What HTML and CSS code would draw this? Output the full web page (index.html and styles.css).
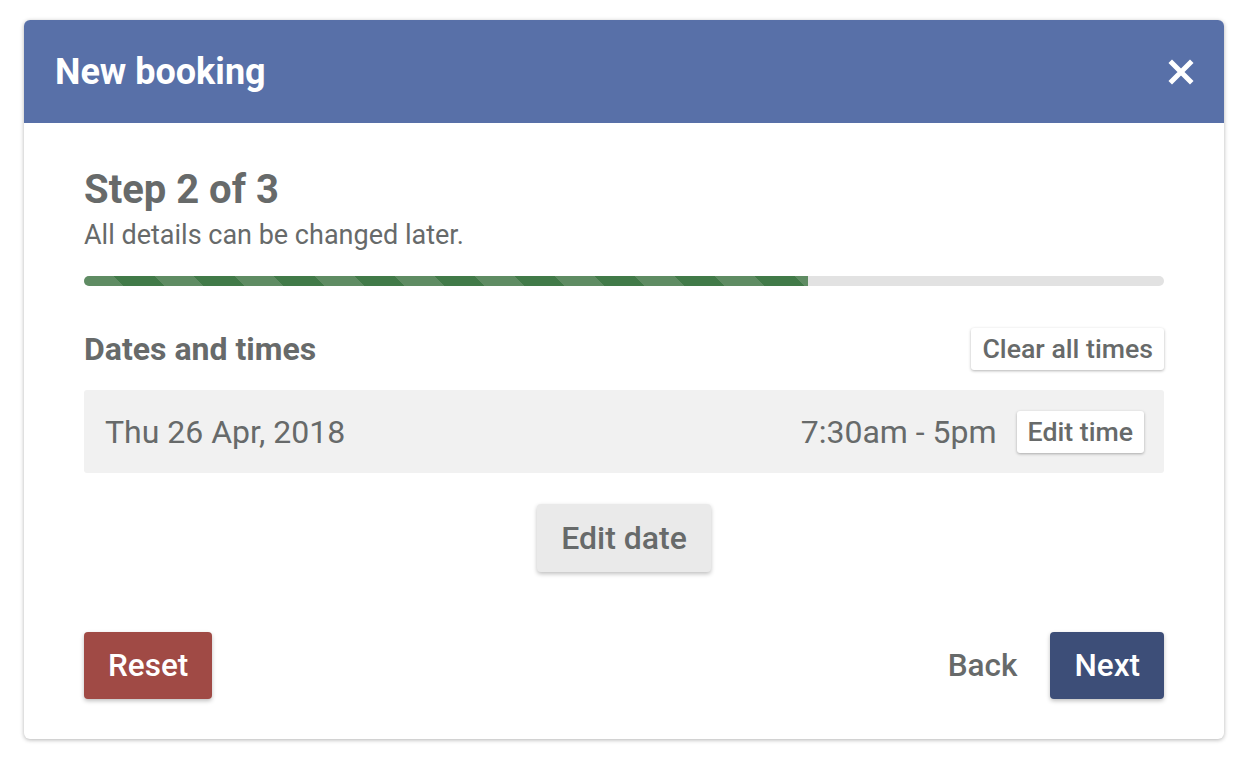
FILE: index.html
```html
<!DOCTYPE html>
<html lang="en">
<head>
<meta charset="utf-8">
<title>New booking</title>
<link rel="stylesheet" href="styles.css">
</head>
<body>
<div class="modal">
  <div class="modal-header">
    <h1 class="modal-title">New booking</h1>
    <button class="close" aria-label="Close">
      <svg width="26" height="26" viewBox="0 0 26 26"><path d="M4 4 L22 22 M22 4 L4 22" stroke="#fff" stroke-width="5" stroke-linecap="square"/></svg>
    </button>
  </div>
  <div class="modal-body">
    <h2 class="step">Step 2 of 3</h2>
    <p class="hint">All details can be changed later.</p>
    <div class="progress"><div class="progress-fill" style="width:67%"></div></div>
    <div class="section-head">
      <h3 class="section-title">Dates and times</h3>
      <button class="btn-small">Clear all times</button>
    </div>
    <div class="date-row">
      <span class="date">Thu 26 Apr, 2018</span>
      <div class="time-wrap">
        <span class="time">7:30am - 5pm</span>
        <button class="btn-small">Edit time</button>
      </div>
    </div>
    <div class="center">
      <button class="btn-gray">Edit date</button>
    </div>
    <div class="footer">
      <button class="btn btn-reset">Reset</button>
      <div class="footer-right">
        <button class="btn btn-link">Back</button>
        <button class="btn btn-next">Next</button>
      </div>
    </div>
  </div>
</div>
</body>
</html>
```

FILE: styles.css
```css
* { box-sizing: border-box; }
html, body { margin: 0; background: #fff; }
body {
  font-family: Roboto, "Liberation Sans", Arial, sans-serif;
  padding: 20px 24px;
  color: #676a6a;
}
button { font-family: inherit; cursor: pointer; }
.modal {
  width: 1200px;
  border-radius: 6px;
  box-shadow: 0 1px 4px rgba(0,0,0,0.3);
  overflow: hidden;
  background: #fff;
}
.modal-header {
  background: #5870a8;
  height: 103px;
  display: flex;
  align-items: center;
  justify-content: space-between;
  padding: 0 30px 0 31px;
}
.modal-title {
  margin: 0;
  color: #fff;
  font-size: 36px;
  line-height: 44px;
  font-weight: 700;
}
.close {
  background: none;
  border: 0;
  padding: 0;
  display: flex;
}
.modal-body {
  padding: 43px 60px 40px;
}
.step {
  margin: 0;
  font-size: 40px;
  font-weight: 700;
  line-height: 48px;
}
.hint {
  margin: 5px 0 0;
  font-size: 27px;
  line-height: 32px;
}
.progress {
  margin-top: 25px;
  height: 10px;
  border-radius: 5px;
  background: #e2e2e2;
  overflow: hidden;
}
.progress-fill {
  height: 100%;
  background: repeating-linear-gradient(45deg, #5f8c63 0 28.28px, #417a48 28.28px 56.57px);
}
.section-head {
  margin-top: 42px;
  display: flex;
  justify-content: space-between;
  align-items: center;
}
.section-title {
  margin: 0;
  font-size: 32px;
  line-height: 38px;
  font-weight: 700;
}
.btn-small {
  background: #fff;
  border: 0;
  border-radius: 3px;
  box-shadow: 0 1px 3px rgba(0,0,0,0.3);
  color: #676a6a;
  font-size: 26.7px;
  font-weight: 500;
  height: 42px;
  padding: 0 11px;
}
.date-row {
  margin-top: 20px;
  background: #f1f1f1;
  border-radius: 3px;
  height: 83px;
  display: flex;
  align-items: center;
  justify-content: space-between;
  padding: 0 20px 0 21px;
}
.date, .time { font-size: 32px; }
.time-wrap {
  display: flex;
  align-items: center;
  gap: 20px;
}
.center {
  display: flex;
  justify-content: center;
  margin-top: 31px;
}
.btn-gray {
  background: #eaeaea;
  border: 0;
  border-radius: 4px;
  box-shadow: 0 2px 4px rgba(0,0,0,0.25);
  color: #676a6a;
  font-size: 32px;
  font-weight: 500;
  height: 68px;
  padding: 0 24px;
}
.footer {
  margin-top: 60px;
  display: flex;
  justify-content: space-between;
  align-items: center;
}
.footer-right {
  display: flex;
  align-items: center;
  gap: 33px;
}
.btn {
  border: 0;
  border-radius: 4px;
  font-size: 31.5px;
  font-weight: 500;
  height: 67px;
  padding: 0 24px;
}
.btn-reset {
  background: #a04a45;
  color: #fff;
  box-shadow: 0 2px 4px rgba(0,0,0,0.25);
}
.btn-next {
  background: #3d4e78;
  color: #fff;
  box-shadow: 0 2px 4px rgba(0,0,0,0.25);
}
.btn-link {
  background: none;
  color: #676a6a;
  padding: 0;
}
```
